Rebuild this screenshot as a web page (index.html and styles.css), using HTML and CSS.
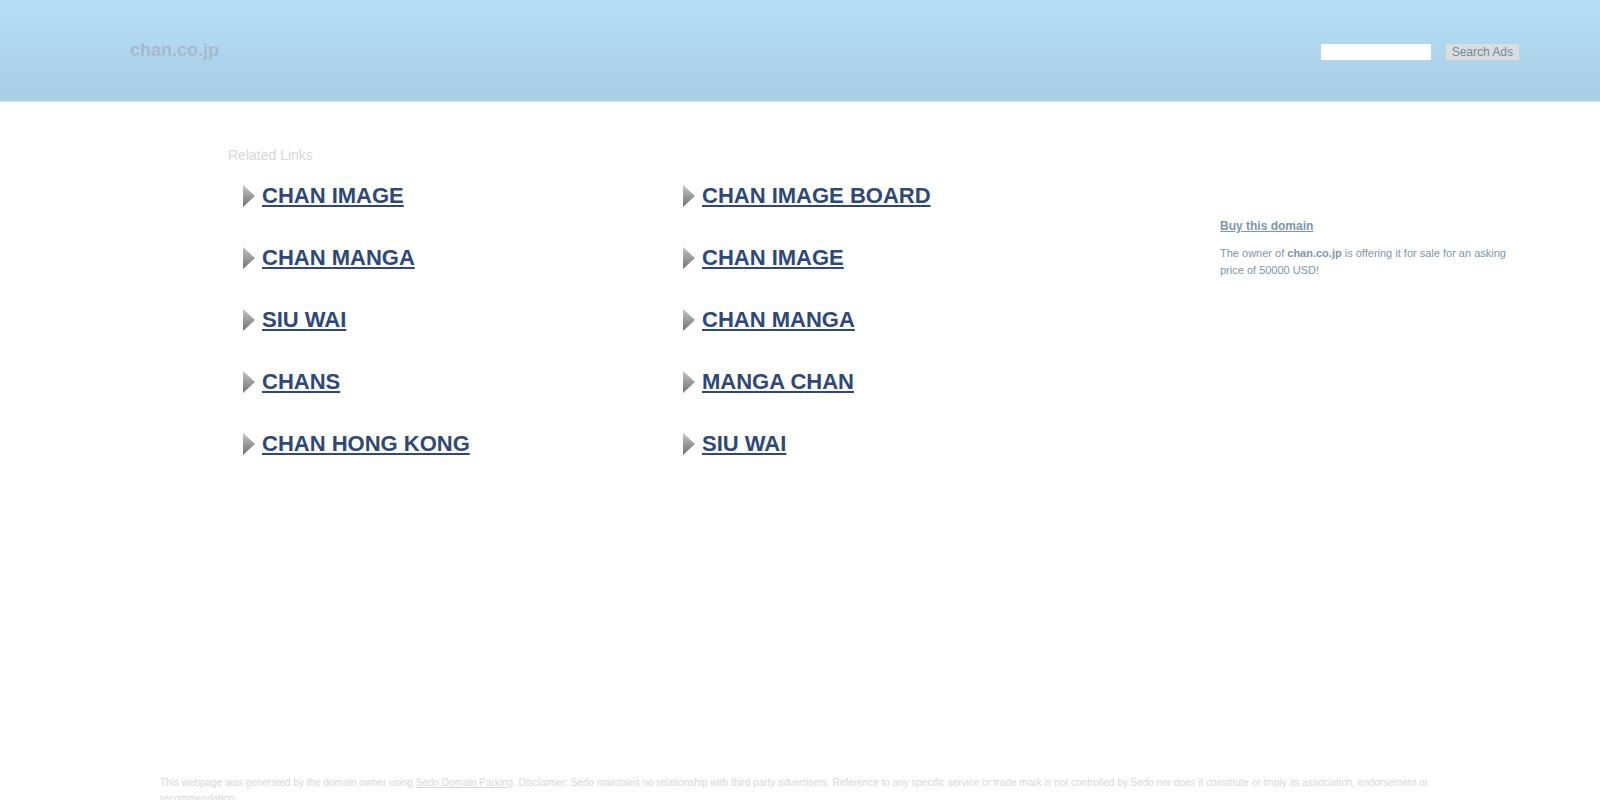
FILE: index.html
```html
<!DOCTYPE html>
<html lang="en">
<head>
<meta charset="utf-8">
<title>chan.co.jp</title>
<link rel="stylesheet" href="styles.css">
</head>
<body>
<svg class="defs" aria-hidden="true">
  <defs>
    <linearGradient id="arrow-fill" x1="0" y1="0" x2="0" y2="1">
      <stop offset="0" stop-color="#c4c4c4"/>
      <stop offset="1" stop-color="#727272"/>
    </linearGradient>
    <symbol id="arrow" viewBox="0 0 12 22"><path d="M0 0L12 11L0 22Z" fill="url(#arrow-fill)"/></symbol>
  </defs>
</svg>
<header class="header">
  <h1 class="domain">chan.co.jp</h1>
  <form class="search">
    <input class="search-box" type="text" aria-label="Search">
    <button class="search-button" type="submit">Search Ads</button>
  </form>
</header>
<main class="main">
  <section class="related">
    <h2 class="related-title">Related Links</h2>
    <ul class="links">
      <li class="item"><svg class="arrow"><use href="#arrow"/></svg><a class="link" href="#">CHAN IMAGE</a></li>
      <li class="item"><svg class="arrow"><use href="#arrow"/></svg><a class="link" href="#">CHAN IMAGE BOARD</a></li>
      <li class="item"><svg class="arrow"><use href="#arrow"/></svg><a class="link" href="#">CHAN MANGA</a></li>
      <li class="item"><svg class="arrow"><use href="#arrow"/></svg><a class="link" href="#">CHAN IMAGE</a></li>
      <li class="item"><svg class="arrow"><use href="#arrow"/></svg><a class="link" href="#">SIU WAI</a></li>
      <li class="item"><svg class="arrow"><use href="#arrow"/></svg><a class="link" href="#">CHAN MANGA</a></li>
      <li class="item"><svg class="arrow"><use href="#arrow"/></svg><a class="link" href="#">CHANS</a></li>
      <li class="item"><svg class="arrow"><use href="#arrow"/></svg><a class="link" href="#">MANGA CHAN</a></li>
      <li class="item"><svg class="arrow"><use href="#arrow"/></svg><a class="link" href="#">CHAN HONG KONG</a></li>
      <li class="item"><svg class="arrow"><use href="#arrow"/></svg><a class="link" href="#">SIU WAI</a></li>
    </ul>
  </section>
  <aside class="offer">
    <h2 class="offer-title"><a class="offer-link" href="#">Buy this domain</a></h2>
    <p class="offer-text">The owner of <strong>chan.co.jp</strong> is offering it for sale for an asking price of 50000 USD!</p>
  </aside>
</main>
<footer class="footer">
  <p class="disclaimer">This webpage was generated by the domain owner using <a class="footer-link" href="#">Sedo Domain Parking</a>. Disclaimer: Sedo maintains no relationship with third party advertisers. Reference to any specific service or trade mark is not controlled by Sedo nor does it constitute or imply its association, endorsement or recommendation.</p>
</footer>
</body>
</html>
```
FILE: styles.css
```css
* {
  box-sizing: border-box;
  margin: 0;
  padding: 0;
}

html {
  scrollbar-width: none;
}

body {
  background: #fff;
  font-family: "Liberation Sans", Arial, sans-serif;
}

.defs {
  display: block;
  width: 0;
  height: 0;
}

.header {
  display: flex;
  align-items: flex-start;
  justify-content: space-between;
  padding: 38px 81px 39px 130px;
  border-bottom: 1px solid #d4e7f2;
  background: linear-gradient(#b5dff5, #a8cde4);
}

.domain {
  color: #a6b9d0;
  font-size: 18px;
  line-height: 24px;
}

.search {
  display: flex;
  gap: 15px;
  padding-top: 6px;
}

.search-box {
  width: 110px;
  height: 16px;
  border: 0;
  background: #fff;
  font: 12px "Liberation Sans", Arial, sans-serif;
}

.search-button {
  height: 16px;
  padding: 0 6px;
  border: 0;
  background: #dcdcdc;
  color: #6b8ba4;
  font: 12px/16px "Liberation Sans", Arial, sans-serif;
}

.main {
  display: flex;
  gap: 97px;
  min-height: 665px;
  padding: 44px 5% 0 228px;
}

.related {
  flex: 1;
}

.related-title {
  color: #d7d7d7;
  font-size: 14px;
  font-weight: normal;
  line-height: 18px;
}

.links {
  display: grid;
  grid-template-columns: 1fr 1fr;
  row-gap: 36px;
  padding: 19px 0 0 15px;
  list-style: none;
}

.item {
  display: flex;
  align-items: center;
  gap: 7px;
}

.arrow {
  width: 12px;
  height: 22px;
}

.link {
  color: #2d4879;
  font-size: 22px;
  font-weight: bold;
  line-height: 26px;
}

.offer {
  width: 300px;
  padding-top: 71px;
  color: #7b96ab;
}

.offer-title {
  font-size: 12px;
  line-height: 18px;
}

.offer-link {
  color: inherit;
}

.offer-text {
  padding-top: 10px;
  font-size: 11px;
  line-height: 17px;
}

.footer {
  padding: 8px 10%;
}

.disclaimer {
  color: #d7d7d7;
  font-size: 10px;
  line-height: 16px;
}

.footer-link {
  color: inherit;
}
```
